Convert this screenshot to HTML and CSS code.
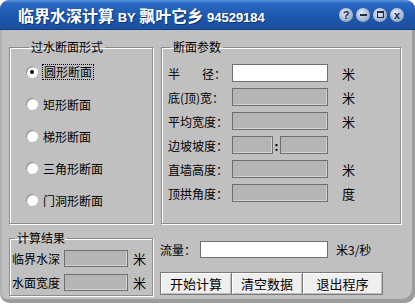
FILE: index.html
```html
<!DOCTYPE html>
<html lang="zh">
<head>
	<meta charset="UTF-8">
	<title>临界水深计算</title>
	<link rel="stylesheet" href="styles.css">
</head>
<body>
	<div class="window">
		<!-- 标题栏 -->
		<div class="titlebar">
			<span class="title">临界水深计算 <span class="en">BY</span> 飘叶它乡 <span class="en">94529184</span></span>
			<div class="tbtns">
				<span class="tbtn">?</span>
				<span class="tbtn"><i class="ico-min"></i></span>
				<span class="tbtn"><i class="ico-max"></i></span>
				<span class="tbtn">x</span>
			</div>
		</div>
		<div class="content">
			<!-- 断面形式 -->
			<fieldset class="group shapes">
				<legend>过水断面形式</legend>
				<label class="radio"><span class="dot on"></span><span class="focus">圆形断面</span></label>
				<label class="radio"><span class="dot"></span><span>矩形断面</span></label>
				<label class="radio"><span class="dot"></span><span>梯形断面</span></label>
				<label class="radio"><span class="dot"></span><span>三角形断面</span></label>
				<label class="radio"><span class="dot"></span><span>门洞形断面</span></label>
			</fieldset>
			<!-- 断面参数 -->
			<fieldset class="group params">
				<legend>断面参数</legend>
				<div class="row"><span class="lbl spread"><span>半</span><span>径：</span></span><span class="box white"></span><span class="unit">米</span></div>
				<div class="row"><span class="lbl">底(顶)宽：</span><span class="box"></span><span class="unit">米</span></div>
				<div class="row"><span class="lbl">平均宽度：</span><span class="box"></span><span class="unit">米</span></div>
				<div class="row"><span class="lbl">边坡坡度：</span><span class="box short"></span><span class="sep">:</span><span class="box half"></span></div>
				<div class="row"><span class="lbl">直墙高度：</span><span class="box"></span><span class="unit">米</span></div>
				<div class="row"><span class="lbl">顶拱角度：</span><span class="box"></span><span class="unit">度</span></div>
			</fieldset>
			<!-- 计算结果 -->
			<fieldset class="group result">
				<legend>计算结果</legend>
				<div class="rrow"><span>临界水深</span><span class="box rbox"></span><span class="runit">米</span></div>
				<div class="rrow"><span>水面宽度</span><span class="box rbox"></span><span class="runit">米</span></div>
			</fieldset>
			<div class="actions">
				<div class="flow"><span class="flbl">流量：</span><span class="box white fbox"></span><span class="funit">米3/秒</span></div>
				<div class="buttons">
					<span class="btn b1">开始计算</span>
					<span class="btn b2">清空数据</span>
					<span class="btn b3">退出程序</span>
				</div>
			</div>
		</div>
	</div>
</body>
</html>
```

FILE: styles.css
```css
*{
	margin:0;
	padding:0;
	box-sizing:border-box;
}
body{
	background:#fff;
	font-family:"Noto Sans CJK SC","Liberation Sans",sans-serif;
	font-size:12px;
	color:#000;
}
.window{
	width:415px;
	height:303px;
	background:#c0c0c0;
	border-radius:9px 9px 10px 10px;
	overflow:hidden;
	box-shadow:inset -3px -4px 0 #9c9c9c, inset 2px 0 0 #b2b2b2;
}
/* 标题栏 */
.titlebar{
	height:30px;
	background:linear-gradient(#5a92e0 0%,#2a68c4 12%,#1d58ae 55%,#1a509f 100%);
	border-bottom:1px solid #123f80;
	display:flex;
	align-items:center;
	justify-content:space-between;
	padding:0 11px 0 18px;
}
.title{
	color:#fff;
	font-weight:bold;
	font-size:16px;
	text-shadow:1px 1px 0 #0d3670;
}
.title .en{
	font-family:"Liberation Sans",sans-serif;
	font-size:13px;
}
.tbtns{
	display:flex;
	gap:3px;
}
.tbtn{
	width:14px;
	height:14px;
	border-radius:50%;
	background:radial-gradient(circle at 40% 35%,#e4ebf6 0%,#a9b8d2 55%,#7f92b3 100%);
	color:#1b2c4c;
	font-family:"Liberation Sans",sans-serif;
	font-weight:bold;
	font-size:11px;
	line-height:14px;
	text-align:center;
	display:flex;
	align-items:center;
	justify-content:center;
}
.ico-min{
	width:7px;
	height:2px;
	background:#1b2c4c;
}
.ico-max{
	width:7px;
	height:7px;
	border:1px solid #1b2c4c;
	border-top-width:2px;
}
/* 内容 */
.content{
	display:grid;
	grid-template-columns:144px 240px;
	column-gap:8px;
	row-gap:6px;
	padding:9px 0 0 9px;
}
.group{
	border:1px solid #8c8c8c;
	box-shadow:inset 1px 1px 0 #fff,1px 1px 0 #fff;
	padding:0;
	min-width:0;
}
.group legend{
	margin-left:3px;
	padding:0 2px;
	line-height:16px;
	font-size:12px;
}
.shapes{
	height:185px;
	padding:1px 0 0 16px;
}
.radio{
	display:flex;
	align-items:center;
	height:32px;
	gap:4px;
}
.dot{
	width:12px;
	height:12px;
	border-radius:50%;
	background:radial-gradient(circle at 60% 60%,#fff 45%,#e6e6e6 100%);
	box-shadow:inset 1px 1px 1px #8a8a8a;
	display:flex;
	align-items:center;
	justify-content:center;
}
.dot.on:after{
	content:"";
	width:4px;
	height:4px;
	border-radius:50%;
	background:#000;
}
.focus{
	outline:1px dotted #000;
	padding:0 1px;
	line-height:14px;
}
.radio span:last-child{
	margin-left:1px;
}
.params{
	height:185px;
	padding:6px 0 0 6px;
}
.row{
	display:flex;
	align-items:center;
	height:24px;
}
.lbl{
	width:64px;
	white-space:nowrap;
}
.spread{
	display:flex;
	justify-content:space-between;
	padding-right:6px;
}
.box{
	display:block;
	width:96px;
	height:18px;
	background:#b5b5b5;
	border:1px solid #6e6e6e;
	box-shadow:inset -1px -1px 0 #d4d4d4;
}
.box.white{
	background:#fff;
	box-shadow:none;
}
.box.short{
	width:41px;
}
.box.half{
	width:48px;
}
.sep{
	width:7px;
	text-align:center;
	font-weight:bold;
}
.unit{
	margin-left:14px;
	font-size:13px;
}
.result{
	height:66px;
	padding:0 0 0 2px;
}
.rrow{
	display:flex;
	align-items:center;
	height:24px;
}
.rbox{
	width:64px;
	height:17px;
	margin-left:4px;
}
.runit{
	margin-left:5px;
	font-size:13px;
}
.actions{
	margin-left:-1px;
	padding-top:10px;
}
.flow{
	display:flex;
	align-items:center;
	height:18px;
}
.flbl{
	width:40px;
}
.fbox{
	width:128px;
	height:17px;
}
.funit{
	margin-left:8px;
}
.buttons{
	display:flex;
	margin-top:14px;
}
.btn{
	height:23px;
	background:#efefef;
	border:1px solid #7a7a7a;
	box-shadow:inset 1px 1px 0 #fff,inset -1px -1px 0 #bdbdbd;
	display:flex;
	align-items:center;
	justify-content:center;
	font-size:13px;
}
.b1{
	width:72px;
}
.b2{
	width:71px;
	border-left:none;
}
.b3{
	width:80px;
	border-left:none;
}
```
